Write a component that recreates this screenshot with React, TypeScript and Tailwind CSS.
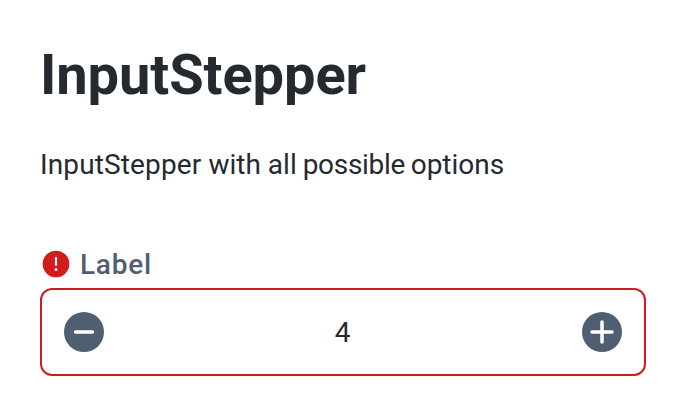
export default function App() {
  return (
    <main className="h-[416px] w-[686px] bg-white px-10 pt-10 font-['Roboto',sans-serif] text-[#252a31]">
      <h1 className="h-[70px] text-[56px] leading-[70px] font-bold tracking-[-0.08px] whitespace-nowrap">InputStepper</h1>
      <p className="mt-[35px] h-[40px] text-[28px] leading-[40px] whitespace-nowrap">
        <span className="tracking-[0.13px]">InputStepper </span>
        <span>with </span>
        <span className="[word-spacing:-1px]">all </span>
        <span className="tracking-[-0.3px] [word-spacing:-1px]">possible </span>
        options
      </p>
      <label className="mt-[59px] flex h-10 items-center gap-2 text-[28px] leading-[40px] font-medium tracking-[0.75px] text-[#4f5e71]">
        <svg viewBox="0 0 24 24" className="size-8" fill="#d21c1c">
          <path fillRule="evenodd" d="M12 2a10 10 0 1 0 0 20 10 10 0 0 0 0-20Zm-.8 4.8h1.6v6.5h-1.6V6.8Zm.8 8.3a1.1 1.1 0 1 1 0 2.2 1.1 1.1 0 0 1 0-2.2Z" />
        </svg>
        <span className="pt-0.5">Label</span>
      </label>
      <div className="mt-1 flex h-[88px] items-center justify-between rounded-xl border-2 border-[#d21c1c] px-[22px]">
        <button aria-label="Decrement">
          <svg viewBox="0 0 40 40" className="size-10">
            <circle cx="20" cy="20" r="20" fill="#4f5e71" />
            <path d="M11.5 20h17" stroke="white" strokeWidth="3.5" strokeLinecap="round" />
          </svg>
        </button>
        <span className="pt-0.5 pr-px text-[28px] leading-10">4</span>
        <button aria-label="Increment">
          <svg viewBox="0 0 40 40" className="size-10">
            <circle cx="20" cy="20" r="20" fill="#4f5e71" />
            <path d="M10 20h20M20 10v20" stroke="white" strokeWidth="3.5" strokeLinecap="round" />
          </svg>
        </button>
      </div>
    </main>
  );
}
